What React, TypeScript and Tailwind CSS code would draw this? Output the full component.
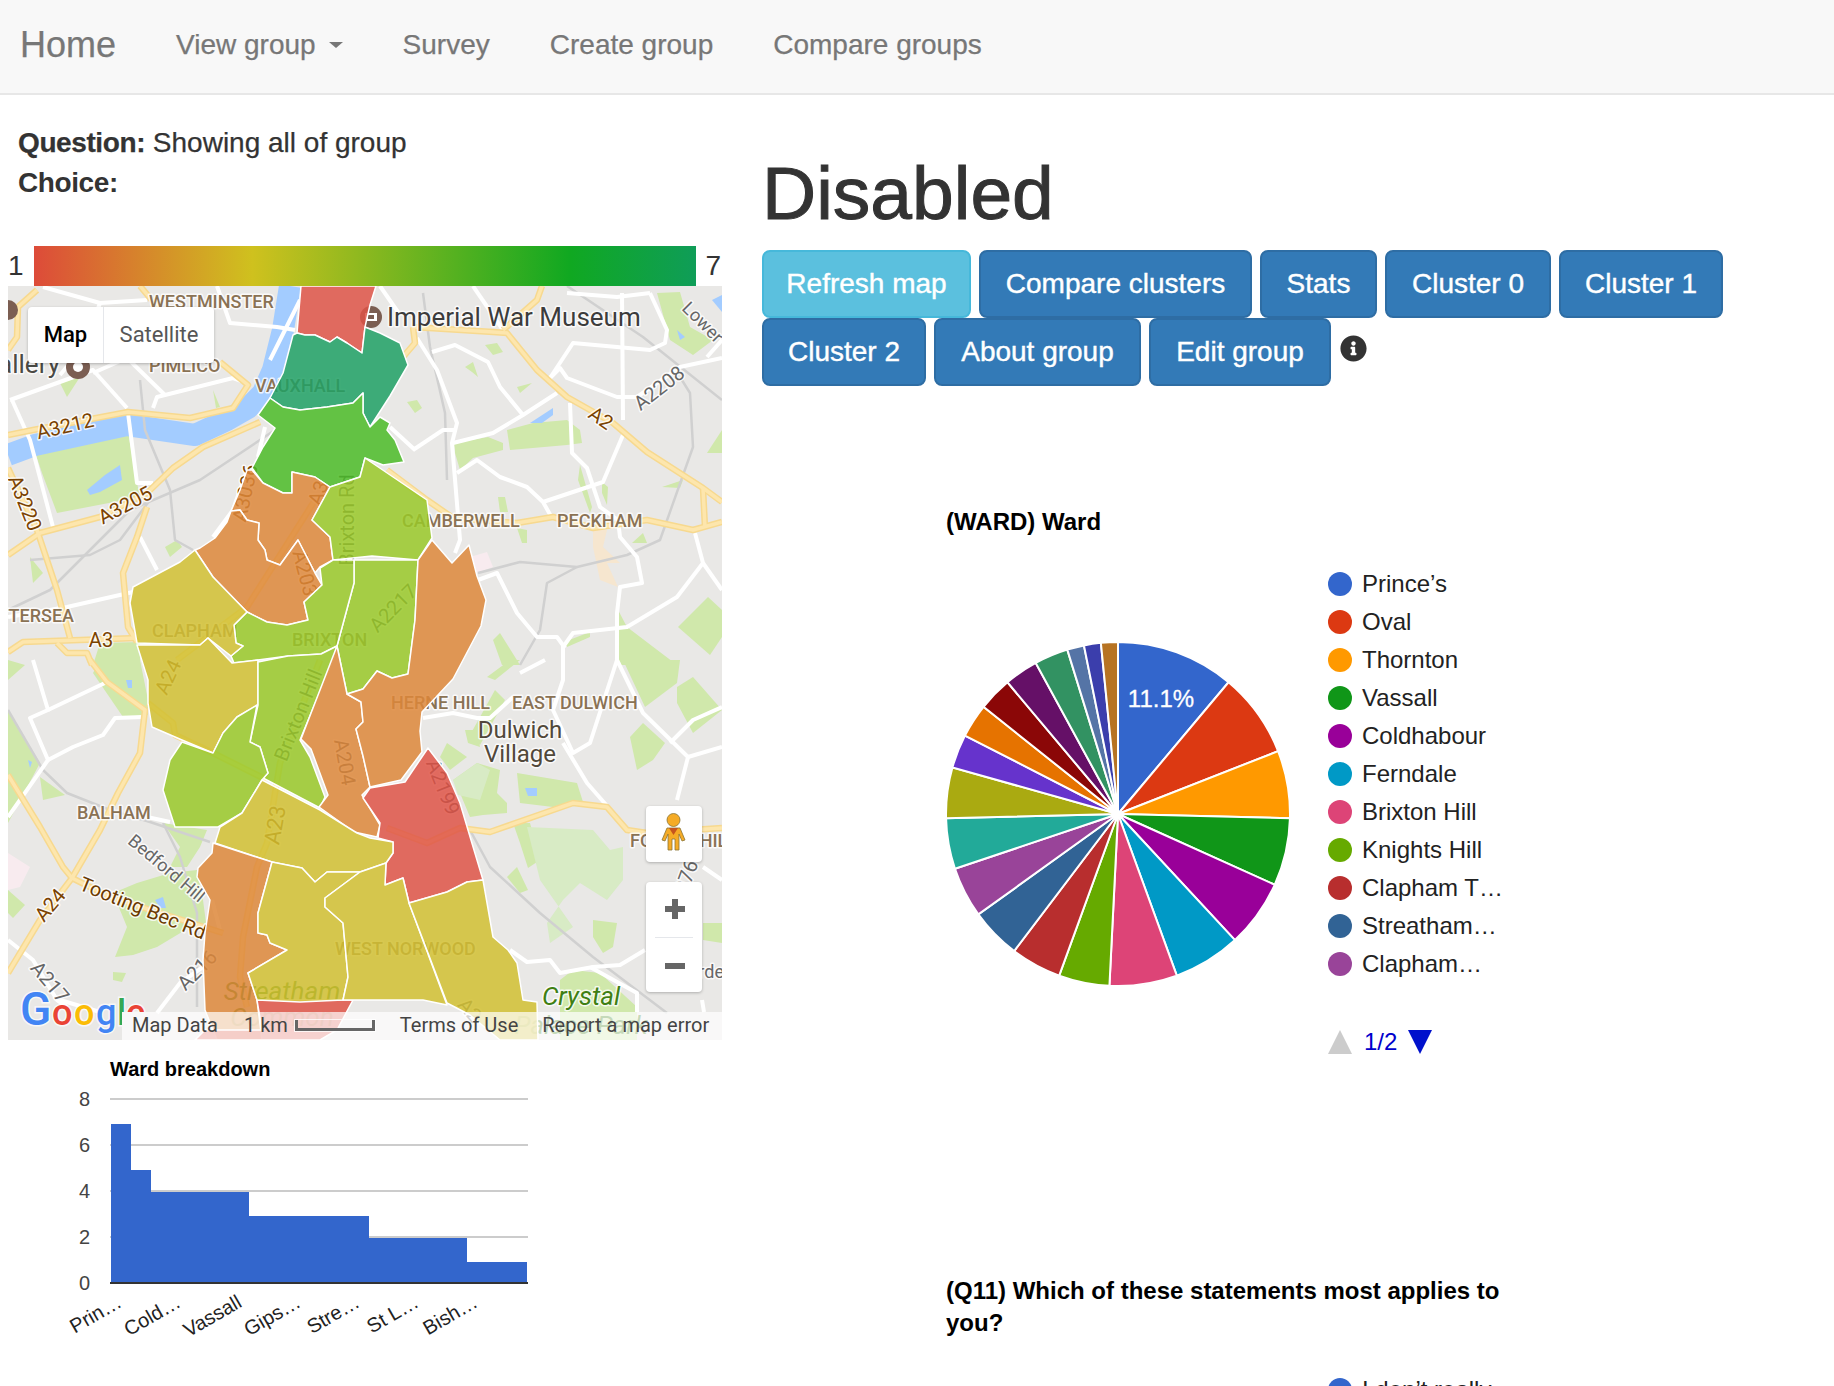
import { FaInfoCircle } from 'react-icons/fa';

const navLinks = ['Survey', 'Create group', 'Compare groups'];

const buttons = [
  { label: 'Refresh map', width: 'w-[209px]', info: true },
  { label: 'Compare clusters', width: 'w-[273px]' },
  { label: 'Stats', width: 'w-[117px]' },
  { label: 'Cluster 0', width: 'w-[166px]' },
  { label: 'Cluster 1', width: 'w-[164px]' },
  { label: 'Cluster 2', width: 'w-[164px]' },
  { label: 'About group', width: 'w-[207px]' },
  { label: 'Edit group', width: 'w-[182px]' },
];

const pieSlices = [
  [7, '#3366cc'], [5, '#dc3912'], [4, '#ff9900'], [4, '#109618'], [4, '#990099'],
  [4, '#0099c6'], [4, '#dd4477'], [3, '#66aa00'], [3, '#b82e2e'], [3, '#316395'],
  [3, '#994499'], [3, '#22aa99'], [3, '#aaaa11'], [2, '#6633cc'], [2, '#e67300'],
  [2, '#8b0707'], [2, '#651067'], [2, '#329262'], [1, '#5574a6'], [1, '#3b3eac'],
  [1, '#b77322'],
] as const;

const legend = [
  ['Prince’s', '#3366cc'], ['Oval', '#dc3912'], ['Thornton', '#ff9900'], ['Vassall', '#109618'],
  ['Coldhabour', '#990099'], ['Ferndale', '#0099c6'], ['Brixton Hill', '#dd4477'],
  ['Knights Hill', '#66aa00'], ['Clapham T…', '#b82e2e'], ['Streatham…', '#316395'],
  ['Clapham…', '#994499'],
];

// ward breakdown bars, page coordinates
const bars = [
  [111, 131, 1124], [131, 151, 1170], [151, 249, 1192], [249, 369, 1216], [369, 467, 1238], [467, 527, 1262],
];
const barLabels = [
  ['Prin…', 123], ['Cold…', 182], ['Vassall', 243], ['Gips…', 302], ['Stre…', 361], ['St L…', 420], ['Bish…', 479],
] as const;

// map data is all in page pixels, the svg viewBox starts at the map's corner
const parks = [
  '35,452 128,432 137,483 140,497 57,513 42,473',
  '60,383 80,377 67,397', '165,547 177,540 182,547 170,557', '213,390 220,407 216,408',
  '30,557 43,573 33,583', '100,643 140,642 140,665 93,665',
  '507,430 533,423 567,420 580,430 582,443 567,445 510,450',
  '454,443 488,437 503,443 503,450 473,458 460,470 455,453',
  '657,293 680,292 690,327 713,340 693,355 670,340',
  '485,345 497,343 503,352 493,355', '465,367 473,362 478,377 472,372', '517,387 532,383 520,393',
  '407,402 417,400 422,408 415,413', '498,497 505,497 508,512 500,512', '517,528 527,530 527,543 522,543',
  '580,465 592,507 590,513 578,480', '602,482 608,487 607,505 602,493', '662,487 683,480 680,488',
  '707,453 722,430 722,453', '632,543 643,533 647,543',
  '617,608 627,627 677,665 617,665', '678,627 708,597 722,610 722,637 710,655',
  '493,640 500,633 520,665 502,665', '564,642 590,632 590,637 567,647',
  '93,673 100,660 140,660 148,700 148,715 123,717', '8,710 40,763 8,823', '40,777 65,795 43,800',
  '163,823 207,830 200,847 187,867 170,867 180,847',
  '113,893 137,883 170,873 197,870 203,900 207,930 197,923 157,947 133,955 115,957 127,927',
  '113,972 126,973 122,982 113,980', '8,890 25,905 13,918 8,913', '8,660 25,665 8,680',
  '440,757 447,743 467,757 450,770', '453,780 477,763 500,770 497,793 507,803 507,813 483,815 470,817 460,793',
  '517,773 577,783 583,802 553,807 520,803', '487,677 510,660 520,660 495,680',
  '465,730 477,730 480,747 468,743', '630,737 643,723 665,743 653,760 637,770',
  '677,687 693,677 722,710 693,733 677,703', '623,660 680,660 677,683 645,707',
  '507,877 517,867 528,890 520,893', '513,823 530,823 540,860 528,868 520,843',
  '593,920 617,923 613,947 603,953 593,937', '703,923 722,923 722,943 703,940',
  '560,980 573,970 600,973 637,1007 637,1040 560,1040', '495,690 470,735 480,745 505,700',
];
const paleParks = [
  '527,827 593,830 610,850 623,847 623,880 607,900 580,883 563,900 547,923 550,943 573,927 540,880',
  '453,780 477,763 490,770 480,800 458,795',
];
const lakes = [
  '87,490 105,475 120,465 122,480 100,492 90,495', '530,423 553,408 553,415 542,423',
  '677,330 685,337 680,340', '712,300 722,295 722,312', '525,788 537,788 537,796 528,796',
  '155,900 163,897 166,908 160,908', '126,680 132,680 132,688 128,688', '28,760 32,762 30,768',
];
const whiteRoads = [
  '10,400 93,370 127,408', '12,400 30,440 53,527', '128,413 137,483 153,483', '153,408 157,397 233,378 247,383',
  '43,287 100,303 147,300', '217,286 230,323 277,327 295,330', '133,592 67,607 8,617', '140,537 157,570',
  '258,457 265,427', '213,537 233,510 247,470', '93,373 127,358 165,395', '100,303 85,345 60,375',
  '417,338 437,370 457,423 452,443 460,540 455,553', '453,443 493,433 523,415 557,393',
  '432,352 455,345 488,362 500,387 523,415', '413,450 443,430 457,430', '390,427 415,450',
  '457,473 477,460 500,477 527,487 543,502 552,518', '543,502 603,482 623,435',
  '570,403 572,453 587,468 600,507 618,520 620,537 637,557 642,583 620,587 617,613 617,665',
  '550,378 573,343 650,350 665,343 667,330 650,293', '473,286 503,330',
  '550,378 560,368 567,378 617,397 637,397 680,367 722,358', '622,293 623,420',
  '695,533 703,563 677,597 627,627 573,633 563,647 563,665', '703,563 722,590',
  '478,580 497,573 517,613 537,637 557,637 565,648', '567,293 617,297 650,293', '707,357 722,340',
  '33,660 48,710 30,718 48,760 8,817', '48,710 107,682', '48,760 73,747 103,735 115,718 143,717',
  '147,817 170,822', '8,940 33,960 57,1000 67,1007', '157,1013 180,983 203,967', '212,900 220,930',
  '423,718 453,713 477,718 490,718 513,697', '563,743 587,783 608,807', '520,673 545,660',
  '563,660 563,680 553,710 573,753 590,743 617,660', '617,660 643,713 688,757 677,800', '688,757 722,747',
  '670,743 693,720 722,707', '510,950 527,962 550,960 560,973 593,967 620,965 645,950', '590,967 637,993 637,1012',
  '703,867 722,880', '702,1000 704,1012', '60,1000 100,1012', '300,300 270,360', '380,286 400,315',
];
const grayLines = [
  '478,573 520,562 577,567 627,555 660,540 693,447 690,393 680,377', '567,286 643,337 722,400',
  '423,293 430,347 445,413 447,480', '577,567 547,583 540,630 520,665', '8,710 43,770 67,793 110,810 150,822 210,842',
  '163,823 180,857 197,913 197,1007', '470,830 490,867 540,913 593,957 667,1013',
  '140,380 145,430 170,490 175,540 193,550', '8,610 50,590 130,510 200,480 275,430',
  '30,560 90,555 120,540 150,500',
];
const yellowRoads = [
  '413,327 493,332 507,333 537,370 567,397 613,423 647,452 703,488 722,502', '503,330 537,300 542,286',
  '413,327 415,343 403,357', '387,470 427,500 453,518 517,523 553,517 593,528 647,520 693,530 722,522',
  '703,488 705,528', '8,435 33,430 128,412 190,418 233,408 248,385 220,362', '8,555 40,533 100,517 147,493 173,468 203,447 260,422',
  '8,468 37,530 57,590 70,638', '8,652 23,642 137,638', '147,507 137,537 123,573 128,627 137,642', '57,643 67,653 87,653 92,665',
  '37,290 18,307 17,337 8,350', '90,660 107,682 145,710 140,753 118,793 100,830 72,878 40,920 8,973',
  '8,775 40,827 63,867 72,878 110,897 223,933', '320,660 280,763 275,793 267,843 257,867 243,937 240,977 247,1007',
  '387,828 427,843 460,828 490,832 573,803 607,807 627,830 647,833 722,828', '177,660 247,607 317,497',
  '148,703 173,723 175,735 213,753 267,780', '140,286 160,310',
];
const wardColors = {
  teal: '#1fa064', green: '#4bbb27', lime: '#99c828', orange: '#dd8739', yellow: '#d1c031', red: '#de5346',
};
const wards: [keyof typeof wardColors, string][] = [
  ['red', '301,286 376,286 370,305 365,327 362,353 347,343 337,337 330,342 315,335 305,335 297,333'],
  ['teal', '297,333 305,335 315,335 330,342 337,337 347,343 362,353 365,327 380,333 400,343 408,365 390,396 370,427 363,413 363,393 353,403 327,407 300,410 283,407 270,398 283,373 293,335'],
  ['green', '270,398 283,407 300,410 327,407 353,403 363,393 363,413 370,427 380,417 390,423 387,430 395,440 404,462 383,465 365,458 360,477 330,487 315,477 292,472 292,493 283,493 263,483 252,468 263,447 275,428 258,415'],
  ['orange', '247,470 252,470 263,483 283,493 292,493 292,472 315,477 330,487 312,520 330,537 333,560 320,567 315,573 298,540 280,565 267,560 265,550 258,540 259,523 247,520 240,510 231,511 240,490'],
  ['orange', '231,511 240,510 247,520 259,523 258,540 265,550 267,560 280,565 298,540 315,573 322,585 304,602 308,620 287,625 267,622 247,612 213,577 195,550 200,548 215,538 227,522'],
  ['lime', '365,458 427,500 432,538 418,560 372,556 333,560 330,537 312,520 330,487 360,477'],
  ['lime', '354,560 418,560 415,620 408,674 392,678 377,671 363,689 347,694 337,646 354,583'],
  ['lime', '354,560 333,560 320,568 322,585 304,602 308,620 287,625 267,622 247,612 234,625 236,643 243,646 231,656 234,663 288,656 321,654 337,646 354,583'],
  ['yellow', '195,550 213,577 247,612 234,625 236,643 243,646 231,656 208,638 200,645 137,643 130,603 133,587 180,562'],
  ['yellow', '137,645 200,645 208,638 232,663 258,660 258,705 237,717 223,733 213,753 182,740 152,727 148,703 148,680'],
  ['lime', '258,662 288,656 321,654 337,646 333,660 300,740 310,757 325,797 320,808 263,778 268,773 260,747 250,742 258,705'],
  ['lime', '257,705 237,717 223,733 213,753 182,742 170,760 163,790 175,827 218,827 242,813 262,780 268,773 260,747 250,742'],
  ['orange', '337,646 347,694 361,702 363,722 356,729 363,756 370,787 362,795 380,825 377,837 354,832 319,807 328,795 311,749 301,739'],
  ['orange', '432,540 452,563 469,545 477,576 486,600 481,626 453,679 422,712 420,731 422,752 401,780 370,787 363,756 356,729 363,722 361,702 347,694 363,689 377,671 392,678 408,674 415,620 418,560'],
  ['red', '428,748 447,773 460,803 468,830 483,880 467,882 447,892 409,903 403,878 385,885 386,863 393,853 393,842 378,838 380,823 363,798 370,788 405,782'],
  ['yellow', '262,780 320,810 357,833 370,838 393,842 393,853 386,863 360,872 327,872 315,882 302,868 272,862 215,843 220,827 242,813'],
  ['orange', '213,843 272,862 258,913 258,933 267,935 270,943 287,950 248,973 257,1000 262,1040 217,1040 205,1010 203,960 205,933 210,900 197,877 198,868 212,853'],
  ['red', '257,1000 300,1000 353,1000 337,1030 320,1040 195,1040 205,1030 262,1030'],
  ['yellow', '272,862 302,868 315,882 327,872 360,872 325,898 325,907 343,923 348,977 343,1000 300,1002 257,1000 248,973 287,950 270,943 267,935 258,933 258,913'],
  ['yellow', '360,872 386,863 385,885 403,878 409,903 447,1005 423,1000 373,1000 343,1000 348,977 343,923 325,907 325,898'],
  ['yellow', '409,903 447,892 467,882 483,880 493,937 508,950 517,963 523,1000 537,1002 538,1040 500,1040 470,1015 447,1003'],
];

// [text, cx, cy, rotate, size, colour]
const roadLabels: [string, number, number, number, number, string][] = [
  ['A3212', 65, 426, -13, 20, '#7a4200'], ['A3205', 125, 505, -28, 20, '#7a4200'], ['A3220', 25, 503, 68, 20, '#7a4200'],
  ['A3', 101, 640, 0, 20, '#7a4200'], ['A2', 601, 418, 35, 20, '#7a4200'], ['A2208', 659, 388, -38, 20, '#666666'],
  ['Lower', 703, 322, 45, 18, '#666666'], ['A3036', 245, 493, -78, 20, '#7a4200'], ['A3', 318, 493, -70, 20, '#7a4200'],
  ['A203', 305, 573, 75, 20, '#7a4200'], ['Brixton Rd', 347, 520, -90, 20, '#555555'], ['A2217', 393, 608, -45, 20, '#555555'],
  ['A24', 168, 677, -65, 20, '#7a4200'], ['A24', 50, 905, -50, 20, '#7a4200'], ['Brixton Hill', 298, 715, -68, 20, '#555555'],
  ['A204', 345, 762, 80, 20, '#555555'], ['A23', 275, 825, -80, 22, '#7a4200'], ['A2199', 443, 787, 68, 20, '#555555'],
  ['Bedford Hill', 167, 868, 40, 18, '#666666'], ['Tooting Bec Rd', 143, 908, 22, 20, '#6b3a00'], ['A216', 197, 970, -45, 20, '#666666'],
  ['A217', 50, 982, 50, 20, '#666666'], ['A2076', 682, 888, -70, 20, '#666666'], ['A2', 470, 1010, 50, 20, '#666666'],
];
// [text, x, baseline]
const areaLabels: [string, number, number][] = [
  ['WESTMINSTER', 149, 308], ['PIMLICO', 149, 372], ['VAUXHALL', 255, 392], ['CAMBERWELL', 402, 527],
  ['PECKHAM', 557, 527], ['BRIXTON', 292, 646], ['CLAPHAM', 152, 637], ['HERNE HILL', 391, 709],
  ['EAST DULWICH', 512, 709], ['BALHAM', 77, 819], ['FOREST HILL', 630, 847], ['WEST NORWOOD', 335, 955],
];

function slicePath(start: number, end: number, r: number) {
  const a = ((start - 90) * Math.PI) / 180;
  const b = ((end - 90) * Math.PI) / 180;
  const large = end - start > 180 ? 1 : 0;
  return `M0 0L${r * Math.cos(a)} ${r * Math.sin(a)}A${r} ${r} 0 ${large} 1 ${r * Math.cos(b)} ${r * Math.sin(b)}Z`;
}

function PieChart() {
  let angle = 0;
  return (
    <svg viewBox="-174 -174 348 348" className="-ml-[2px] block h-[348px] w-[348px]">
      {pieSlices.map(([value, color]) => {
        const start = angle;
        angle += (value / 63) * 360;
        return <path key={color} d={slicePath(start, angle, 172)} fill={color} stroke="#ffffff" strokeWidth="2" />;
      })}
      <text x="43" y="-107" textAnchor="middle" fontSize="24" fill="#ffffff" stroke="#ffffff" strokeWidth="0.3">11.1%</text>
    </svg>
  );
}

function BarChart() {
  return (
    <svg viewBox="8 1040 714 346" className="block h-[346px] w-full">
      <text x="110" y="1076" fontSize="20" fontWeight="700" fill="#000000">Ward breakdown</text>
      {[1099, 1145, 1191, 1237].map((y) => (
        <line key={y} x1="110" x2="528" y1={y} y2={y} stroke="#cccccc" strokeWidth="2" />
      ))}
      {bars.map(([x1, x2, top]) => (
        <rect key={x1} x={x1} y={top} width={x2 - x1} height={1283 - top} fill="#3366cc" />
      ))}
      <line x1="110" x2="528" y1="1283" y2="1283" stroke="#333333" strokeWidth="2" />
      {[['8', 1106], ['6', 1152], ['4', 1198], ['2', 1244], ['0', 1290]].map(([label, y]) => (
        <text key={label} x="90" y={y} textAnchor="end" fontSize="20" fill="#444444">{label}</text>
      ))}
      {barLabels.map(([label, x]) => (
        <text key={label} transform={`translate(${x} 1306) rotate(-30)`} textAnchor="end" fontSize="20" fill="#222222">{label}</text>
      ))}
    </svg>
  );
}

function MapDrawing() {
  const halo = { paintOrder: 'stroke' as const, stroke: '#ffffff', strokeOpacity: 0.8, strokeWidth: 3, strokeLinejoin: 'round' as const };
  return (
    <svg viewBox="8 286 714 754" className="block h-full w-full" fontFamily="Roboto, sans-serif">
      <rect x="8" y="286" width="714" height="754" fill="#e9e8e6" />
      <polygon points="470,557 487,552 493,567 477,573" fill="#f8ebef" />
      <polygon points="8,853 30,867 20,887 8,890" fill="#f8ebef" />
      <polygon points="593,530 607,530 603,547 620,563 607,563 618,587 600,580 593,547" fill="#f6e6cf" />
      {parks.map((p) => <polygon key={p} points={p} fill="#d0e8ab" />)}
      {paleParks.map((p) => <polygon key={p} points={p} fill="#d8ebc5" />)}
      <polyline points="8,455 35,445 127,425 195,435 227,420 248,408 263,393 273,370 283,330 290,286" fill="none" stroke="#a3ccff" strokeWidth="22" strokeLinejoin="round" />
      {lakes.map((p) => <polygon key={p} points={p} fill="#a3ccff" />)}
      {grayLines.map((p) => <polyline key={p} points={p} fill="none" stroke="#d0d0d0" strokeWidth="2.5" strokeLinejoin="round" />)}
      {whiteRoads.map((p) => <polyline key={p} points={p} fill="none" stroke="#ffffff" strokeWidth="4" strokeLinejoin="round" />)}
      {yellowRoads.map((p) => <polyline key={p} points={p} fill="none" stroke="#f7d98f" strokeWidth="6.5" strokeLinejoin="round" />)}
      {yellowRoads.map((p) => <polyline key={`${p}-in`} points={p} fill="none" stroke="#fde6ad" strokeWidth="3.5" strokeLinejoin="round" />)}

      {roadLabels.map(([text, x, y, rot, size, color], i) => (
        <text key={i} transform={`translate(${x} ${y}) rotate(${rot})`} textAnchor="middle" dominantBaseline="central" fontSize={size} fill={color} {...halo}>{text}</text>
      ))}
      {areaLabels.map(([text, x, y]) => (
        <text key={text} x={x} y={y} fontSize="18" fontWeight="500" fill="#8a7254" {...halo}>{text}</text>
      ))}
      <text x="74" y="622" textAnchor="end" fontSize="18" fontWeight="500" fill="#8a7254" {...halo}>BATTERSEA</text>
      <text x="60" y="373" textAnchor="end" fontSize="26" fill="#4a4a45" {...halo}>Tate Gallery</text>
      <circle cx="78" cy="367" r="12" fill="#7b5e52" />
      <circle cx="78" cy="367" r="5" fill="#ffffff" />
      <circle cx="8" cy="310" r="10" fill="#7b5e52" />
      <text x="387" y="326" fontSize="26" fill="#3c3c3c" {...halo}>Imperial War Museum</text>
      <circle cx="371" cy="317" r="11" fill="#7b5e52" />
      <rect x="365" y="313" width="12" height="8" fill="#ffffff" />
      <rect x="368" y="315" width="6" height="4" fill="#7b5e52" />
      <text x="520" y="738" textAnchor="middle" fontSize="24" fill="#51483a" {...halo}>Dulwich</text>
      <text x="520" y="762" textAnchor="middle" fontSize="24" fill="#51483a" {...halo}>Village</text>
      <text x="282" y="1000" textAnchor="middle" fontSize="26" fontStyle="italic" fill="#3f7f14">Streatham</text>
      <text x="282" y="1026" textAnchor="middle" fontSize="26" fontStyle="italic" fill="#3f7f14">Common</text>
      <text x="581" y="1005" textAnchor="middle" fontSize="26" fontStyle="italic" fill="#3f7f14" {...halo}>Crystal</text>
      <text x="581" y="1034" textAnchor="middle" fontSize="26" fontStyle="italic" fill="#3f7f14">Palace Park</text>
      <text x="724" y="978" textAnchor="end" fontSize="18" fill="#666666" {...halo}>Garde</text>

      {wards.map(([tone, p]) => (
        <polygon key={p} points={p} fill={wardColors[tone]} fillOpacity="0.85" stroke="#ffffff" strokeWidth="1.5" strokeLinejoin="round" />
      ))}

      <g fontSize="46" fontWeight="500" stroke="#ffffff" strokeWidth="3" strokeOpacity="0.7" paintOrder="stroke">
        <text x="20" y="1025" fill="#4285f4">G</text>
        <text x="52" y="1025" fontSize="36" fill="#ea4335">o</text>
        <text x="74" y="1025" fontSize="36" fill="#fbbc05">o</text>
        <text x="96" y="1025" fontSize="36" fill="#4285f4">g</text>
        <text x="117" y="1025" fontSize="36" fill="#34a853">l</text>
        <text x="126" y="1025" fontSize="36" fill="#ea4335">e</text>
      </g>
      <rect x="122" y="1012" width="30" height="28" fill="#e9e8e6" />
    </svg>
  );
}

function GoogleMap() {
  return (
    <div className="relative h-[754px] overflow-hidden font-['Roboto',sans-serif]">
      <MapDrawing />

      {/* Map type control */}
      <div className="absolute left-[20px] top-[21px] flex h-[56px] w-[186px] rounded bg-white text-[22px] shadow-[0_1px_3px_rgba(0,0,0,0.25)]">
        <div className="flex w-[76px] items-center justify-center border-r border-gray-200 font-medium text-black">Map</div>
        <div className="flex flex-1 items-center justify-center text-[#565656]">Satellite</div>
      </div>

      {/* Street view */}
      <div className="absolute left-[638px] top-[520px] h-[56px] w-[56px] rounded bg-white shadow-[0_1px_3px_rgba(0,0,0,0.25)]">
        <svg viewBox="0 0 56 56" className="h-full w-full">
          <circle cx="27.5" cy="14" r="6.5" fill="#f5ab26" stroke="#8a7333" strokeWidth="0.8" />
          <path d="M21 22H34L39 34L36 35L33 28V44H29V33H26V44H22V28L19 35L16 34Z" fill="#f5ab26" stroke="#8a7333" strokeWidth="0.8" />
          <path d="M23 22H32L27.5 29Z" fill="#c6541d" />
        </svg>
      </div>

      {/* Zoom */}
      <div className="absolute left-[638px] top-[596px] flex h-[110px] w-[56px] flex-col items-center rounded bg-white shadow-[0_1px_3px_rgba(0,0,0,0.25)]">
        <svg viewBox="0 0 56 55" className="h-[55px] w-[56px]">
          <path d="M29 17V37M19 27H39" stroke="#666666" strokeWidth="6" />
        </svg>
        <div className="h-px w-[38px] bg-gray-200" />
        <svg viewBox="0 0 56 54" className="h-[54px] w-[56px]">
          <path d="M19 28H39" stroke="#666666" strokeWidth="6" />
        </svg>
      </div>

      {/* Attribution strip */}
      <div className="absolute bottom-0 left-[114px] right-0 flex h-[28px] items-center bg-white/70 pb-[2px] text-[20px] leading-none text-[#444444]">
        <span className="ml-[10px]">Map Data</span>
        <span className="ml-[26px]">1 km</span>
        <span className="ml-[7px] h-[11px] w-[80px] border-x-[3px] border-b-[3px] border-[#666666] outline outline-white/80" />
        <span className="ml-[25px]">Terms of Use</span>
        <span className="ml-[24px]">Report a map error</span>
      </div>
    </div>
  );
}

export default function App() {
  return (
    <div className="h-[1386px] overflow-hidden bg-white font-['Liberation_Sans',Arial,sans-serif] text-[28px] leading-[40px] text-[#333333]">
      {/* Navbar */}
      <nav className="flex h-[95px] items-center border-b-2 border-[#e7e7e7] bg-[#f8f8f8] pb-1 text-[#777777] [-webkit-text-stroke:0.25px]">
        <a className="pl-5 pr-[30px] text-[36px]">Home</a>
        <a className="flex items-center px-[30px]">
          View group
          <span className="ml-[13px] h-0 w-0 border-x-[7px] border-t-[6px] border-x-transparent border-t-[#777777]" />
        </a>
        {navLinks.map((link) => (
          <a key={link} className="px-[30px]">{link}</a>
        ))}
      </nav>

      <div className="flex">
        {/* Left column */}
        <div className="w-[730px] px-2">
          <div className="pl-[10px] pt-[28px]">
            <p className="[-webkit-text-stroke:0.25px]"><b className="tracking-[-0.4px]">Question:</b> Showing all of group</p>
            <p><b className="tracking-[-0.4px]">Choice:</b></p>
          </div>
          <div className="mt-[43px] flex h-10 items-center">
            <span className="w-[26px]">1</span>
            <div className="h-full flex-1 bg-[linear-gradient(90deg,#dd4b39_0%,#cfc11e_33%,#10a821_81%,#0f9d58_100%)]" />
            <span className="w-[26px] pr-[1px] text-right">7</span>
          </div>
          <GoogleMap />
          <BarChart />
        </div>

        {/* Right column */}
        <div className="flex-1 pl-8">
          <h1 className="mt-[50px] text-[75px] font-medium leading-[96px] [-webkit-text-stroke:1px_#333333]">Disabled</h1>
          <div className="mt-[9px] flex flex-wrap gap-x-2">
            {buttons.map((btn) => (
              <button
                key={btn.label}
                className={`h-[68px] rounded-lg border-2 text-white [-webkit-text-stroke:0.4px_#ffffff] ${btn.width} ${
                  btn.info ? 'border-[#46b8da] bg-[#5bc0de]' : 'border-[#2e6da4] bg-[#337ab7]'
                }`}
              >
                {btn.label}
              </button>
            ))}
            <FaInfoCircle className="ml-[1px] mt-[17px] h-[27px] w-[27px] text-[#333333]" />
          </div>

          <div className="ml-[184px] text-[24px] leading-[32px] text-black">
            <h3 className="mt-[120px] font-bold">(WARD) Ward</h3>
            <div className="mt-[27px] flex">
              <div className="w-[382px] pt-[75px]">
                <PieChart />
              </div>
              <div>
                {legend.map(([name, color]) => (
                  <div key={name} className="flex h-[38px] items-center gap-[10px] text-[#222222]">
                    <svg viewBox="0 0 24 24" className="h-6 w-6"><circle cx="12" cy="12" r="12" fill={color} /></svg>
                    {name}
                  </div>
                ))}
                <div className="mt-[47px] flex h-6 items-center text-[#0000cc]">
                  <svg viewBox="0 0 24 24" className="h-6 w-6"><path d="M12 0L24 24H0Z" fill="#cccccc" /></svg>
                  <span className="ml-3">1/2</span>
                  <svg viewBox="0 0 24 24" className="ml-[11px] h-6 w-6"><path d="M0 0H24L12 24Z" fill="#0011cc" /></svg>
                </div>
              </div>
            </div>

            <h3 className="mt-[221px] w-[570px] font-bold">(Q11) Which of these statements most applies to you?</h3>
            <div className="ml-[382px] mt-[32px] flex h-[38px] items-center gap-[10px] text-[#222222]">
              <svg viewBox="0 0 24 24" className="h-6 w-6"><circle cx="12" cy="12" r="12" fill="#3366cc" /></svg>
              I don’t really
            </div>
          </div>
        </div>
      </div>
    </div>
  );
}
